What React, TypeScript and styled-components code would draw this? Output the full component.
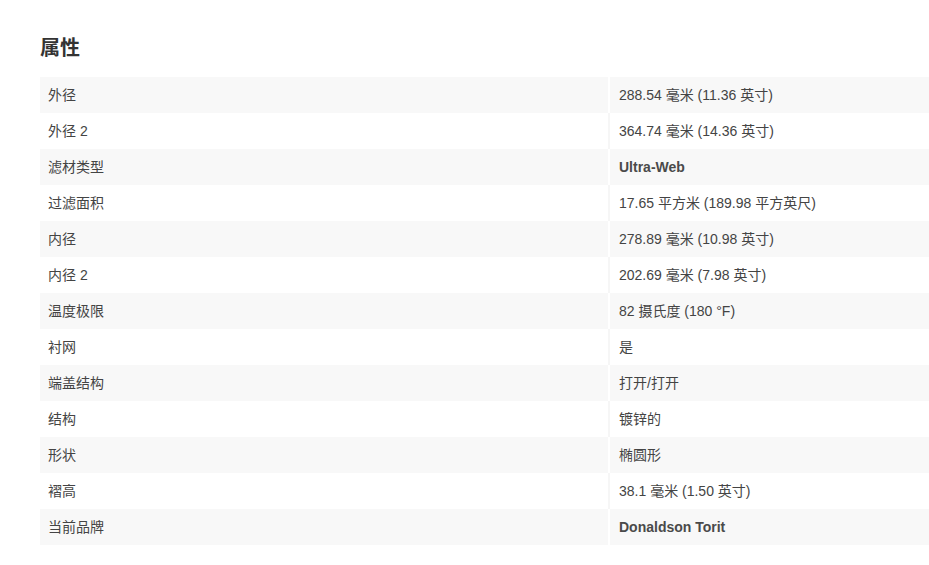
import React from "react";
import styled, { createGlobalStyle } from "styled-components";

const Global = createGlobalStyle`
  html, body { margin: 0; padding: 0; background: #fff; overflow: hidden; }
  body { font-family: "Liberation Sans", Arial, "Noto Sans CJK SC", sans-serif; }
`;

const Section = styled.section`
  padding: 36px 0 0 40px;
`;

const Title = styled.h2`
  margin: 0 0 17px 0;
  font-size: 20px;
  line-height: 24px;
  font-weight: 700;
  color: #333;
  font-family: "Liberation Sans", Arial, "Noto Sans CJK SC", sans-serif;
`;

const Table = styled.table`
  border-collapse: collapse;
  width: 889px;
  table-layout: fixed;
`;

const Row = styled.tr<{ $shade: boolean }>`
  background: ${(p) => (p.$shade ? "#f8f8f8" : "#ffffff")};
  height: 36px;
`;

const Label = styled.td`
  box-sizing: border-box;
  width: 569px;
  padding: 0 8px;
  font-size: 14px;
  line-height: 16px;
  color: #444;
  vertical-align: middle;
`;

const Value = styled.td<{ $shade: boolean; $strong?: boolean }>`
  box-sizing: border-box;
  padding: 0 9px 0 9px;
  font-size: 14px;
  line-height: 16px;
  color: ${(p) => (p.$strong ? "#4a4a4a" : "#444")};
  vertical-align: middle;
  font-weight: ${(p) => (p.$strong ? 700 : 400)};
  border-left: 2px solid ${(p) => (p.$shade ? "#ffffff" : "#f6f6f6")};
`;

const rows: { k: string; v: string; strong?: boolean }[] = [
  { k: "外径", v: "288.54 毫米 (11.36 英寸)" },
  { k: "外径 2", v: "364.74 毫米 (14.36 英寸)" },
  { k: "滤材类型", v: "Ultra-Web", strong: true },
  { k: "过滤面积", v: "17.65 平方米 (189.98 平方英尺)" },
  { k: "内径", v: "278.89 毫米 (10.98 英寸)" },
  { k: "内径 2", v: "202.69 毫米 (7.98 英寸)" },
  { k: "温度极限", v: "82 摄氏度 (180 °F)" },
  { k: "衬网", v: "是" },
  { k: "端盖结构", v: "打开/打开" },
  { k: "结构", v: "镀锌的" },
  { k: "形状", v: "椭圆形" },
  { k: "褶高", v: "38.1 毫米 (1.50 英寸)" },
  { k: "当前品牌", v: "Donaldson Torit", strong: true },
];

export default function App() {
  return (
    <>
      <Global />
      <Section>
        <Title>属性</Title>
        <Table>
          <tbody>
            {rows.map((r, i) => {
              const shade = i % 2 === 0;
              return (
                <Row key={r.k} $shade={shade}>
                  <Label>{r.k}</Label>
                  <Value $shade={shade} $strong={r.strong}>
                    {r.v}
                  </Value>
                </Row>
              );
            })}
          </tbody>
        </Table>
      </Section>
    </>
  );
}
